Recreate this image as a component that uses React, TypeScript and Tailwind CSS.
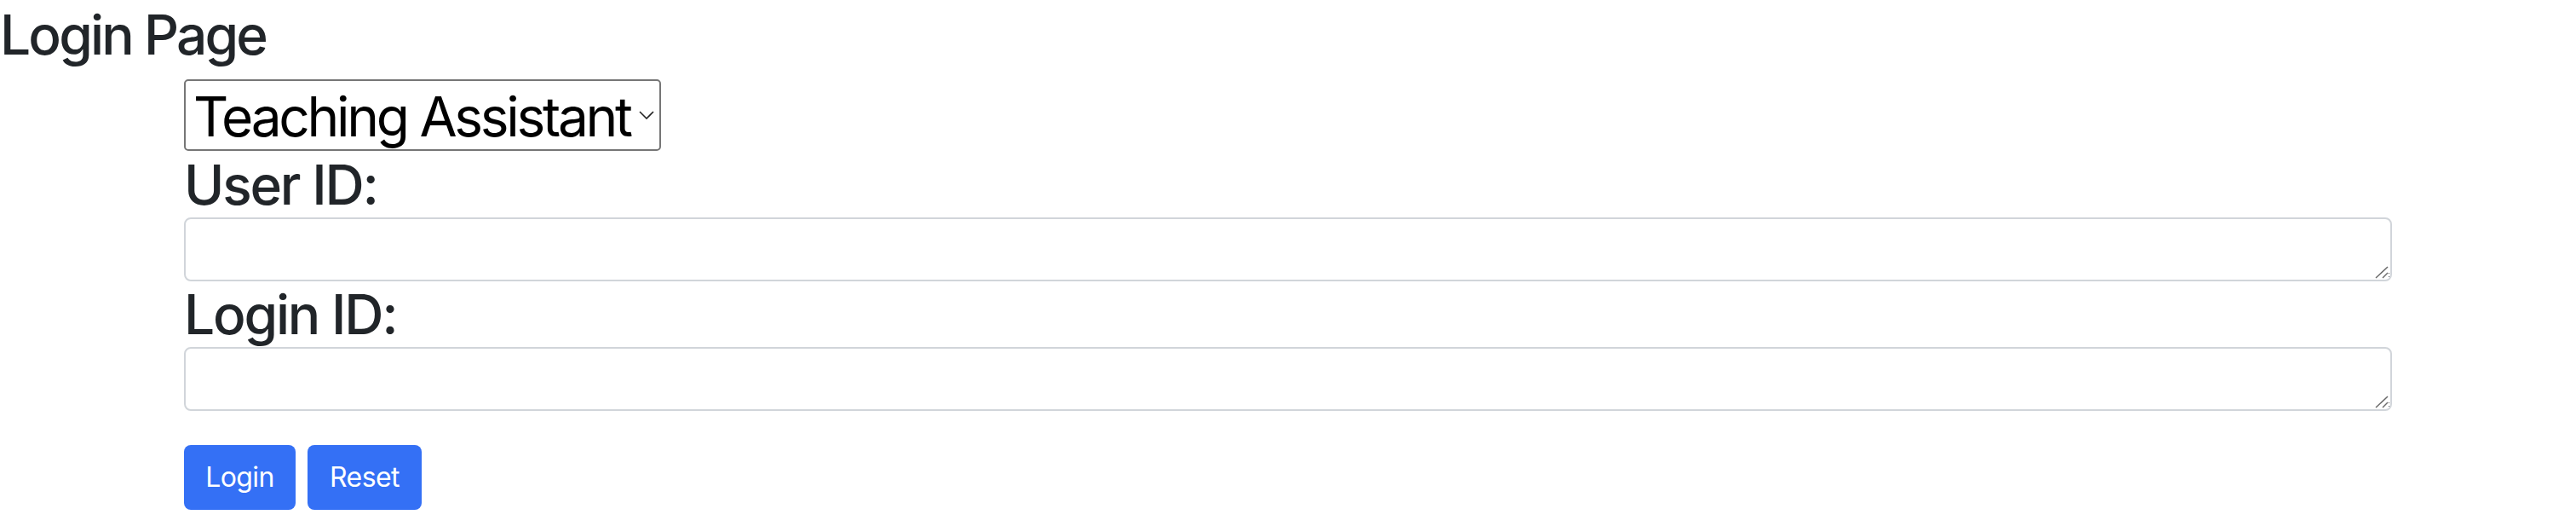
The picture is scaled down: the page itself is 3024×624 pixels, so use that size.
import { useState } from "react";

const roles = ["Teaching Assistant", "Student", "Instructor"] as const;

const fields = [
  { id: "userId", label: "User ID:" },
  { id: "loginId", label: "Login ID:" },
] as const;

function ResizeGrip() {
  return (
    <svg
      aria-hidden="true"
      className="pointer-events-none absolute right-[4px] bottom-[3px]"
      width="16"
      height="16"
      viewBox="0 0 16 16"
    >
      <rect x="0" y="0" width="16" height="16" fill="#fff" />
      <line x1="1" y1="15" x2="15" y2="2" stroke="#6b6b6b" strokeWidth="1.5" />
      <line x1="9" y1="15" x2="15" y2="9" stroke="#6b6b6b" strokeWidth="1.5" />
    </svg>
  );
}

export default function App() {
  const [role, setRole] = useState<string>(roles[0]);
  const [values, setValues] = useState<Record<string, string>>({ userId: "", loginId: "" });

  return (
    <div className="min-h-screen bg-white font-['Inter','Liberation_Sans',Arial,sans-serif] text-[#212529]">
      <h2 className="pt-[2px] pb-[14px] text-[64px] leading-[77px] font-medium tracking-[-2.85px]">
        Login Page
      </h2>

      <div className="mx-auto w-[2640px] px-[24px]">
        <div className="relative mb-[1px] w-[560px]">
          <select
            value={role}
            onChange={(e) => setRole(e.target.value)}
            className="block h-[84px] w-full appearance-none rounded-[5px] border-2 border-[#767676] bg-white pl-[9px] pt-[2px] text-[64px] leading-[77px] tracking-[-3.3px] text-black outline-none"
          >
            {roles.map((r) => (
              <option key={r} value={r}>
                {r}
              </option>
            ))}
          </select>
          <svg
            aria-hidden="true"
            className="pointer-events-none absolute top-[37px] right-[8px]"
            width="18"
            height="10"
            viewBox="0 0 18 10"
          >
            <polyline points="1,1 9,9 17,1" fill="none" stroke="#222" strokeWidth="1.6" />
          </svg>
        </div>

        {fields.map((field) => (
          <div key={field.id}>
            <label
              htmlFor={field.id}
              className="block h-[77px] pt-[1px] text-[64px] leading-[75px] font-medium tracking-[-2.2px]"
            >
              {field.label}
            </label>
            <div className="relative">
              <textarea
                id={field.id}
                value={values[field.id]}
                onChange={(e) => setValues({ ...values, [field.id]: e.target.value })}
                className="block h-[75px] w-full rounded-[8px] border-2 border-[#d1d5da] bg-white outline-none"
              />
              <ResizeGrip />
            </div>
          </div>
        ))}

        <div className="mt-[40px] flex gap-[14px]">
          <button className="flex h-[76px] w-[131px] items-center justify-center rounded-[8px] bg-[#3470f5] text-[32px] tracking-[-0.6px] text-white">
            Login
          </button>
          <button className="flex h-[76px] w-[134px] items-center justify-center rounded-[8px] bg-[#3470f5] text-[32px] tracking-[-0.6px] text-white">
            Reset
          </button>
        </div>
      </div>
    </div>
  );
}
